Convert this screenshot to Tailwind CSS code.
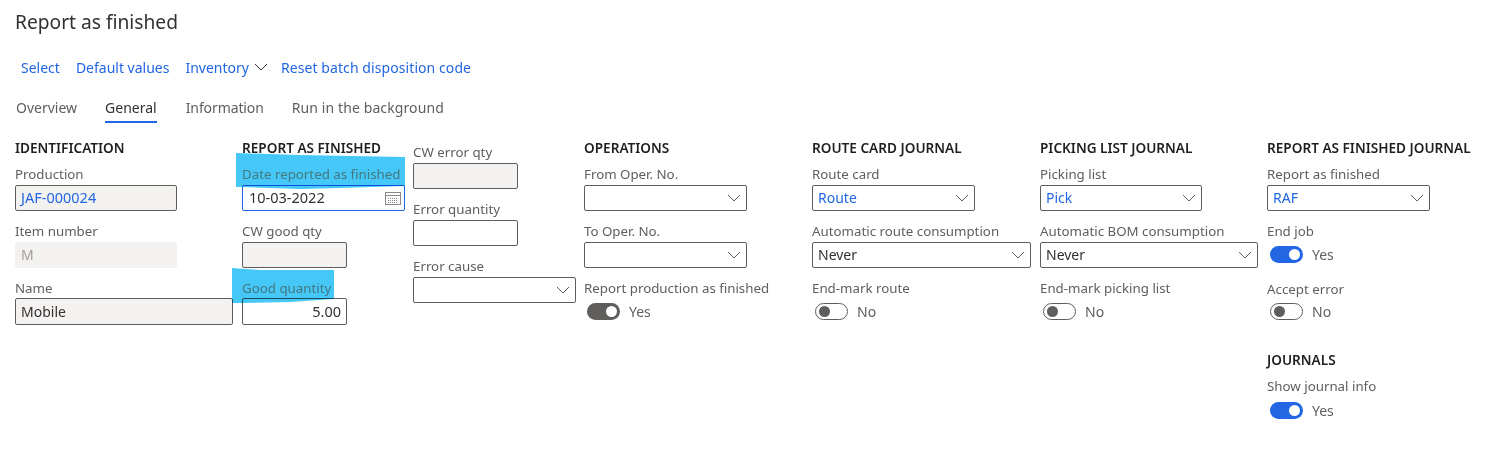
<!DOCTYPE html>
<html lang="en">
<head>
    <meta charset="UTF-8">
    <title>Report as finished</title>
    <script src="https://cdn.jsdelivr.net/npm/@tailwindcss/browser@4"></script>
</head>
<body class="bg-white w-[1508px] h-[457px] overflow-hidden relative font-['Noto_Sans','Open_Sans',sans-serif] text-[13.3px] text-[#605e5c]">

    <!-- Highlighter marks -->
    <svg class="absolute left-0 top-0 z-10 mix-blend-multiply" width="1508" height="457">
        <polygon points="236,153 300,155 405,157 405,186 340,188 300,189 242,187 236,187" fill="#45c8f7"/>
        <polygon points="232,268 260,270 334,270 334,299 290,302 243,303 232,303" fill="#45c8f7"/>
    </svg>

    <h1 class="pl-[15px] pt-[8px] h-[49px] text-[19.2px] leading-[27px] text-[#323130]">Report as finished</h1>

    <!-- Action bar -->
    <div class="flex items-center gap-4 pl-[21px] h-[36px] text-[14px] text-[#2266e3]">
        <span>Select</span>
        <span>Default values</span>
        <span class="flex items-center gap-[5px] -mr-[3px]">Inventory
            <svg width="14" height="8" viewBox="0 0 14 8" fill="none" stroke="#323130" stroke-width="1"><path d="M1 1l6 6 6-6"/></svg>
        </span>
        <span class="tracking-[0.08px]">Reset batch disposition code</span>
    </div>

    <!-- Tabs -->
    <div class="flex pl-[16px] h-[50px] text-[14px] gap-[28px]">
        <span class="pt-[12px] h-[38px]">Overview</span>
        <span class="pt-[12px] h-[38px] border-b-2 border-[#2266e3] text-[#323130]">General</span>
        <span class="pt-[12px] h-[38px] ml-[1px] tracking-[-0.1px]">Information</span>
        <span class="pt-[12px] h-[38px] tracking-[0.1px]">Run in the background</span>
    </div>

    <div class="flex pl-[15px] gap-[9px] pt-[2px]">
        <!-- Identification -->
        <div class="w-[218px]">
            <h2 class="h-[22px] leading-[22px] font-semibold text-[13.6px] text-[#201f1e]">IDENTIFICATION</h2>
            <div class="h-[26px] pt-[4px] leading-[22px]">Production</div>
            <div class="h-[26px] w-[162px] border border-[#605e5c] rounded-[2px] bg-[#f3f2f1] px-[5px] leading-[23px] text-[14.5px] text-[#2266e3]">JAF-000024</div>
            <div class="h-[31px] pt-[9px] leading-[22px]">Item number</div>
            <div class="h-[26px] w-[162px] rounded-[2px] bg-[#f3f2f1] px-[6px] leading-[26px] text-[14px] text-[#a19f9d]">M</div>
            <div class="h-[30px] pt-[9px] leading-[22px]">Name</div>
            <div class="h-[27px] border border-[#605e5c] rounded-[2px] bg-[#f3f2f1] px-[5px] leading-[25px] text-[14px] text-[#323130]">Mobile</div>
        </div>

        <!-- Report as finished -->
        <div class="w-[163px] relative">
            <h2 class="h-[22px] leading-[22px] font-semibold text-[13.6px] text-[#201f1e] whitespace-nowrap">REPORT AS FINISHED</h2>
            <div class="h-[26px] pt-[4px] leading-[22px] relative z-20 text-[#44777f] whitespace-nowrap">Date reported as finished</div>
            <div class="h-[26px] border border-[#2266e3] rounded-[2px] bg-white pl-[6px] pr-[3px] flex items-center justify-between text-[14.5px] text-[#323130]">10-03-2022
                <svg width="16" height="13" viewBox="0 0 16 13" fill="none" stroke="#8a8886" stroke-width="1"><rect x="0.5" y="0.5" width="15" height="12"/><path d="M0.5 3.5h15"/><path d="M3 6.5h10M3 8.5h10M3 10.5h10" stroke-dasharray="1 1"/></svg>
            </div>
            <div class="h-[31px] pt-[9px] leading-[22px]">CW good qty</div>
            <div class="h-[26px] w-[105px] border border-[#605e5c] rounded-[2px] bg-[#f3f2f1]"></div>
            <div class="h-[30px] pt-[9px] leading-[22px] relative z-20 text-[#44777f]">Good quantity</div>
            <div class="h-[27px] w-[105px] border border-[#605e5c] rounded-[2px] bg-white px-[5px] leading-[25px] text-right text-[14.5px] text-[#323130]">5.00</div>
        </div>

        <!-- Errors -->
        <div class="w-[163px] -ml-[1px] -mr-[1px]">
            <div class="h-[26px] leading-[30px]">CW error qty</div>
            <div class="h-[26px] w-[105px] border border-[#605e5c] rounded-[2px] bg-[#f3f2f1]"></div>
            <div class="h-[31px] pt-[9px] leading-[22px]">Error quantity</div>
            <div class="h-[26px] w-[105px] border border-[#605e5c] rounded-[2px] bg-white"></div>
            <div class="h-[31px] pt-[9px] leading-[22px]">Error cause</div>
            <div class="h-[26px] border border-[#605e5c] rounded-[2px] bg-white flex items-center justify-end pr-[5px]">
                <svg width="14" height="8" viewBox="0 0 14 8" fill="none" stroke="#605e5c" stroke-width="1"><path d="M1 1l6 6 6-6"/></svg>
            </div>
        </div>

        <!-- Operations -->
        <div class="w-[219px]">
            <h2 class="h-[22px] leading-[22px] font-semibold text-[13.6px] text-[#201f1e]">OPERATIONS</h2>
            <div class="h-[26px] pt-[4px] leading-[22px]">From Oper. No.</div>
            <div class="h-[26px] w-[163px] border border-[#605e5c] rounded-[2px] bg-white flex items-center justify-end pr-[5px]">
                <svg width="14" height="8" viewBox="0 0 14 8" fill="none" stroke="#605e5c" stroke-width="1"><path d="M1 1l6 6 6-6"/></svg>
            </div>
            <div class="h-[31px] pt-[9px] leading-[22px]">To Oper. No.</div>
            <div class="h-[26px] w-[163px] border border-[#605e5c] rounded-[2px] bg-white flex items-center justify-end pr-[5px]">
                <svg width="14" height="8" viewBox="0 0 14 8" fill="none" stroke="#605e5c" stroke-width="1"><path d="M1 1l6 6 6-6"/></svg>
            </div>
            <div class="h-[30px] pt-[9px] leading-[22px]">Report production as finished</div>
            <div class="flex items-center gap-[9px] pl-[3px] mt-[3px] text-[14px]">
                <span class="w-[33px] h-[17px] rounded-full bg-[#605e5c] flex items-center justify-end pr-[3px]"><span class="w-[11px] h-[11px] rounded-full bg-white"></span></span>Yes
            </div>
        </div>

        <!-- Route card journal -->
        <div class="w-[219px]">
            <h2 class="h-[22px] leading-[22px] font-semibold text-[13.6px] text-[#201f1e]">ROUTE CARD JOURNAL</h2>
            <div class="h-[26px] pt-[4px] leading-[22px]">Route card</div>
            <div class="h-[26px] w-[163px] border border-[#605e5c] rounded-[2px] bg-white flex items-center justify-between pl-[5px] pr-[5px] text-[14px] text-[#2266e3]"><span class="-mt-[2px]">Route</span>
                <svg width="14" height="8" viewBox="0 0 14 8" fill="none" stroke="#605e5c" stroke-width="1"><path d="M1 1l6 6 6-6"/></svg>
            </div>
            <div class="h-[31px] pt-[9px] leading-[22px]">Automatic route consumption</div>
            <div class="h-[26px] border border-[#605e5c] rounded-[2px] bg-white flex items-center justify-between pl-[5px] pr-[5px] text-[14px] text-[#323130]"><span class="-mt-[2px]">Never</span>
                <svg width="14" height="8" viewBox="0 0 14 8" fill="none" stroke="#605e5c" stroke-width="1"><path d="M1 1l6 6 6-6"/></svg>
            </div>
            <div class="h-[30px] pt-[9px] leading-[22px]">End-mark route</div>
            <div class="flex items-center gap-[9px] pl-[3px] mt-[3px] text-[14px]">
                <span class="w-[33px] h-[17px] rounded-full border border-[#605e5c] flex items-center pl-[3px]"><span class="w-[11px] h-[11px] rounded-full bg-[#605e5c]"></span></span>No
            </div>
        </div>

        <!-- Picking list journal -->
        <div class="w-[218px]">
            <h2 class="h-[22px] leading-[22px] font-semibold text-[13.6px] text-[#201f1e]">PICKING LIST JOURNAL</h2>
            <div class="h-[26px] pt-[4px] leading-[22px]">Picking list</div>
            <div class="h-[26px] w-[162px] border border-[#605e5c] rounded-[2px] bg-white flex items-center justify-between pl-[5px] pr-[5px] text-[14px] text-[#2266e3]"><span class="-mt-[2px]">Pick</span>
                <svg width="14" height="8" viewBox="0 0 14 8" fill="none" stroke="#605e5c" stroke-width="1"><path d="M1 1l6 6 6-6"/></svg>
            </div>
            <div class="h-[31px] pt-[9px] leading-[22px]">Automatic BOM consumption</div>
            <div class="h-[26px] border border-[#605e5c] rounded-[2px] bg-white flex items-center justify-between pl-[5px] pr-[5px] text-[14px] text-[#323130]"><span class="-mt-[2px]">Never</span>
                <svg width="14" height="8" viewBox="0 0 14 8" fill="none" stroke="#605e5c" stroke-width="1"><path d="M1 1l6 6 6-6"/></svg>
            </div>
            <div class="h-[30px] pt-[9px] leading-[22px]">End-mark picking list</div>
            <div class="flex items-center gap-[9px] pl-[3px] mt-[3px] text-[14px]">
                <span class="w-[33px] h-[17px] rounded-full border border-[#605e5c] flex items-center pl-[3px]"><span class="w-[11px] h-[11px] rounded-full bg-[#605e5c]"></span></span>No
            </div>
        </div>

        <!-- Report as finished journal -->
        <div class="w-[224px]">
            <h2 class="h-[22px] leading-[22px] font-semibold text-[13.6px] text-[#201f1e] whitespace-nowrap">REPORT AS FINISHED JOURNAL</h2>
            <div class="h-[26px] pt-[4px] leading-[22px]">Report as finished</div>
            <div class="h-[26px] w-[163px] border border-[#605e5c] rounded-[2px] bg-white flex items-center justify-between pl-[5px] pr-[5px] text-[14px] text-[#2266e3]"><span class="-mt-[2px]">RAF</span>
                <svg width="14" height="8" viewBox="0 0 14 8" fill="none" stroke="#605e5c" stroke-width="1"><path d="M1 1l6 6 6-6"/></svg>
            </div>
            <div class="h-[31px] pt-[9px] leading-[22px]">End job</div>
            <div class="flex items-center gap-[9px] pl-[3px] mt-[2px] text-[14px]">
                <span class="w-[33px] h-[17px] rounded-full bg-[#2266e3] flex items-center justify-end pr-[3px]"><span class="w-[11px] h-[11px] rounded-full bg-white"></span></span>Yes
            </div>
            <div class="h-[34px] pt-[13px] leading-[22px]">Accept error</div>
            <div class="flex items-center gap-[9px] pl-[3px] mt-[2px] text-[14px]">
                <span class="w-[33px] h-[17px] rounded-full border border-[#605e5c] flex items-center pl-[3px]"><span class="w-[11px] h-[11px] rounded-full bg-[#605e5c]"></span></span>No
            </div>
            <h2 class="mt-[27px] h-[22px] leading-[22px] font-semibold text-[13.6px] text-[#201f1e]">JOURNALS</h2>
            <div class="h-[26px] pt-[4px] leading-[22px]">Show journal info</div>
            <div class="flex items-center gap-[9px] pl-[3px] mt-[3px] text-[14px]">
                <span class="w-[33px] h-[17px] rounded-full bg-[#2266e3] flex items-center justify-end pr-[3px]"><span class="w-[11px] h-[11px] rounded-full bg-white"></span></span>Yes
            </div>
        </div>
    </div>
</body>
</html>
